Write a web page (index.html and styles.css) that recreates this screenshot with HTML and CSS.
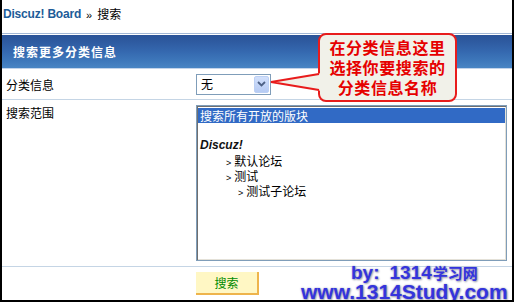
FILE: index.html
```html
<!DOCTYPE html>
<html lang="zh-CN">
<head>
<meta charset="utf-8">
<title>搜索</title>
<link rel="stylesheet" href="styles.css">
</head>
<body>
<div class="frame">
  <div class="crumb"><a class="home">Discuz! Board</a><span class="raquo">&raquo;</span><span class="cur">搜索</span></div>
  <div class="bar"><span class="bar-title">搜索更多分类信息</span></div>
  <div class="row row1">
    <div class="label">分类信息</div>
    <div class="field">
      <div class="select">
        <span class="sel-text">无</span>
        <span class="dd"><svg width="9" height="6" viewBox="0 0 9 6"><path d="M1 1 L4.5 4.5 L8 1" fill="none" stroke="#4d6185" stroke-width="1.8"/></svg></span>
      </div>
    </div>
  </div>
  <div class="row row2">
    <div class="label">搜索范围</div>
    <div class="field">
      <div class="listbox">
        <div class="opt sel">搜索所有开放的版块</div>
        <div class="opt"></div>
        <div class="opt group">Discuz!</div>
        <div class="opt lv1"><span class="gt">&gt;</span>默认论坛</div>
        <div class="opt lv1"><span class="gt">&gt;</span>测试</div>
        <div class="opt lv2"><span class="gt">&gt;</span>测试子论坛</div>
      </div>
    </div>
  </div>
  <div class="row row3">
    <div class="label"></div>
    <div class="field"><button class="btn">搜索</button></div>
  </div>

  <div class="callout">
    <div class="cl">在分类信息这里</div>
    <div class="cl">选择你要搜索的</div>
    <div class="cl">分类信息名称</div>
  </div>
  <svg class="pointer" width="54" height="28" viewBox="0 0 54 28">
    <polygon points="2,14 53,5 53,23" fill="#f1f1e9"/>
    <polyline points="50,6 2,14 50,22" fill="none" stroke="#e81c1c" stroke-width="2" stroke-linejoin="miter"/>
  </svg>

  <div class="wm wm1"><span class="lat">by:</span><span class="lat num">1314</span><span class="cjk">学习网</span></div>
  <div class="wm wm2">www.1314Study.com</div>
</div>
</body>
</html>
```
FILE: styles.css
```css
html, body {
  margin: 0;
  padding: 0;
  background: #fff;
}

.frame {
  position: relative;
  width: 514px;
  height: 302px;
  box-sizing: border-box;
  border: 2px solid #000;
  border-top: 0;
  background: #fff;
  overflow: hidden;
  font-family: "Noto Sans CJK SC", "Liberation Sans", sans-serif;
  font-size: 12px;
  color: #000;
}

.crumb {
  height: 33px;
  box-sizing: border-box;
  padding: 0 0 5px 1px;
  display: flex;
  align-items: center;
}

.home {
  font-family: "Liberation Sans", "Noto Sans CJK SC", sans-serif;
  font-weight: bold;
  font-size: 12px;
  color: #1d5c98;
  letter-spacing: -0.2px;
}

.raquo {
  font-family: "Liberation Sans", sans-serif;
  font-size: 11px;
  margin: 0 5px;
  position: relative;
  top: 1px;
}

.cur {
  font-size: 12px;
  line-height: 14px;
}

.bar {
  height: 36px;
  box-sizing: border-box;
  border-top: 1px solid #a3b8d6;
  border-bottom: 1px solid #c3d4ea;
  background: linear-gradient(#ffffff 0 1px, #2b5397 1px, #2f5ca2 9px, #3569b0 18px, #3e78bb 27px, #4985c4 34px);
  display: flex;
  align-items: center;
  padding: 1px 0 0 11px;
}

.bar-title {
  color: #fff;
  font-weight: bold;
  font-size: 12px;
  letter-spacing: 1px;
  line-height: 14px;
}

.row {
  display: flex;
  border-bottom: 1px solid #c5d5e5;
  box-sizing: border-box;
}

.label {
  width: 194px;
  flex: none;
  box-sizing: border-box;
  padding-left: 4px;
  line-height: 15px;
}

.row1 {
  height: 31px;
  align-items: center;
}

.row2 {
  height: 167px;
  padding-top: 5px;
  align-items: flex-start;
}

.row3 {
  border-bottom: 0;
  padding-top: 5px;
}

.select {
  width: 75px;
  height: 21px;
  box-sizing: border-box;
  border: 1px solid #7f9db9;
  background: #fff;
  display: flex;
  align-items: center;
  justify-content: space-between;
  padding: 1px;
}

.sel-text {
  padding-left: 3px;
  font-size: 12px;
  line-height: 14px;
}

.dd {
  width: 15px;
  height: 17px;
  box-sizing: border-box;
  border: 1px solid #bcd0f4;
  border-radius: 2px;
  background: linear-gradient(#d2e0fb, #b6cbf4);
  display: flex;
  align-items: center;
  justify-content: center;
}

.listbox {
  width: 311px;
  height: 156px;
  box-sizing: border-box;
  border: 1px solid #7f9db9;
  box-shadow: inset 1px 1px 0 #6f6f6f, inset -1px -1px 0 #e4e1d8;
  padding: 2px 1px 0 1px;
  background: #fff;
}

.opt {
  height: 15px;
  line-height: 15px;
  padding-left: 2px;
  white-space: nowrap;
  font-size: 12px;
}

.opt.sel {
  background: #316ac5;
  color: #fff;
}

.opt.group {
  font-family: "Liberation Sans", sans-serif;
  font-style: italic;
  font-weight: bold;
  font-size: 12px;
  color: #111;
}

.gt {
  font-family: "Liberation Sans", sans-serif;
  font-size: 9px;
  margin-right: 3px;
}

.opt.lv1 {
  padding-left: 28px;
}

.opt.lv2 {
  padding-left: 40px;
}

.btn {
  width: 63px;
  height: 23px;
  box-sizing: border-box;
  margin: 0;
  padding: 0;
  background: #fff7c4;
  border: 0;
  border-right: 2px solid #eeb44c;
  border-bottom: 2px solid #eeb44c;
  color: #008a00;
  font-family: "Noto Sans CJK SC", sans-serif;
  font-size: 12px;
  line-height: 14px;
}

.callout {
  position: absolute;
  left: 316px;
  top: 33px;
  width: 139px;
  height: 69px;
  box-sizing: border-box;
  border: 2px solid #e81c1c;
  border-radius: 8px;
  background: #f1f1e9;
  padding-top: 4px;
  display: flex;
  flex-direction: column;
  align-items: center;
  gap: 3px;
  color: #e60000;
  font-weight: bold;
  font-size: 16px;
  letter-spacing: 0.6px;
}

.cl {
  line-height: 17px;
  height: 17px;
  white-space: nowrap;
}

.pointer {
  position: absolute;
  left: 267px;
  top: 68px;
}

.wm {
  position: absolute;
  color: #3434dc;
  font-family: "Liberation Sans", "Noto Sans CJK SC", sans-serif;
  font-weight: bold;
  white-space: nowrap;
  text-shadow: 0 0 2px #a8a8c0, 1px 1px 2px #9a9aaa;
}

.wm1 {
  left: 349px;
  top: 263px;
  font-size: 19px;
  line-height: 19px;
}

.wm1 .num {
  margin-left: 10px;
}

.wm1 .cjk {
  font-family: "Noto Sans CJK SC", sans-serif;
  font-size: 15px;
  margin-left: 1px;
}

.wm2 {
  left: 299px;
  top: 282px;
  font-size: 21px;
  line-height: 19px;
}
```
